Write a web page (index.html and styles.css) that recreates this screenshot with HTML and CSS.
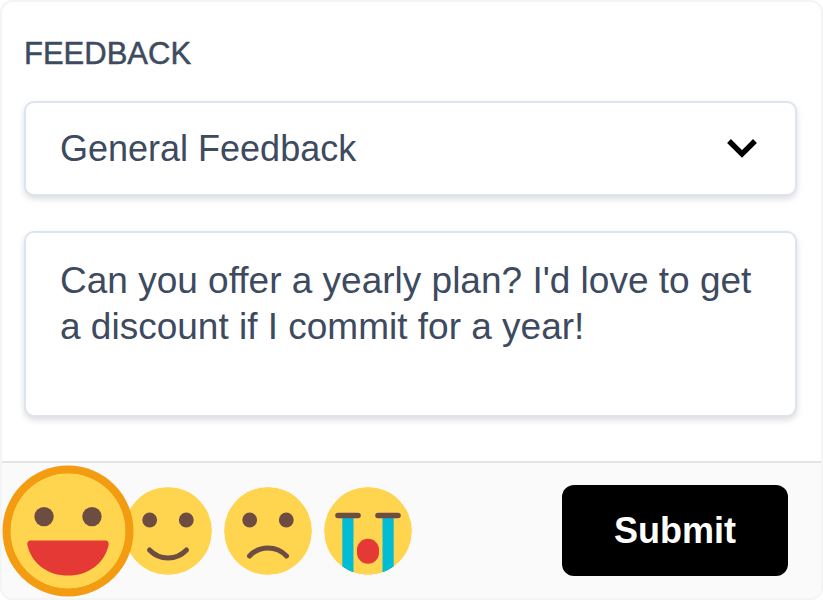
FILE: index.html
```html
<!DOCTYPE html>
<html lang="en">

<head>
    <meta charset="UTF-8">
    <meta name="viewport" content="width=device-width, initial-scale=1.0">
    <title>Feedback</title>
    <link rel="stylesheet" href="styles.css">
</head>

<body>
    <form class="feedback">
        <div class="content">
            <label class="title" for="topic">FEEDBACK</label>

            <div class="select-box">
                <select class="field" id="topic">
                    <option selected>General Feedback</option>
                    <option>Bug Report</option>
                    <option>Feature Request</option>
                </select>
                <svg class="chevron" viewBox="0 0 30 20" aria-hidden="true">
                    <path d="M2 2L15 15L28 2" fill="none" stroke="#000" stroke-width="5.4" />
                </svg>
            </div>

            <textarea class="field message" aria-label="Message" spellcheck="false">Can you offer a yearly plan? I'd love to get a discount if I commit for a year!</textarea>
        </div>

        <div class="footer">
            <div class="moods">
                <label class="mood">
                    <input type="radio" name="mood" value="great" aria-label="Great" checked>
                    <svg viewBox="-44 -44 88 88">
                        <circle r="44" fill="#ffd54f" />
                        <circle cx="-18.3" cy="-11" r="7.4" fill="#6d4c41" />
                        <circle cx="18.3" cy="-11" r="7.4" fill="#6d4c41" />
                        <path d="M-28.6 7.2H28.6C30.2 7.2 31.4 8.8 31 10.6C28 24.5 15.5 34 0 34S-28 24.5 -31 10.6C-31.4 8.8 -30.2 7.2 -28.6 7.2Z" fill="#e53935" />
                    </svg>
                </label>
                <label class="mood">
                    <input type="radio" name="mood" value="good" aria-label="Good">
                    <svg viewBox="-44 -44 88 88">
                        <circle r="44" fill="#ffd54f" />
                        <circle cx="-18.3" cy="-11" r="7.4" fill="#6d4c41" />
                        <circle cx="18.3" cy="-11" r="7.4" fill="#6d4c41" />
                        <path d="M-18.5 19A25.4 25.4 0 0 0 18.5 19" fill="none" stroke="#6d4c41" stroke-width="5" stroke-linecap="round" />
                    </svg>
                </label>
                <label class="mood">
                    <input type="radio" name="mood" value="bad" aria-label="Bad">
                    <svg viewBox="-44 -44 88 88">
                        <circle r="44" fill="#ffd54f" />
                        <circle cx="-18.3" cy="-11" r="7.4" fill="#6d4c41" />
                        <circle cx="18.3" cy="-11" r="7.4" fill="#6d4c41" />
                        <path d="M-18.5 25A25.4 25.4 0 0 1 18.5 25" fill="none" stroke="#6d4c41" stroke-width="5" stroke-linecap="round" />
                    </svg>
                </label>
                <label class="mood">
                    <input type="radio" name="mood" value="awful" aria-label="Awful">
                    <svg viewBox="-44 -44 88 88">
                        <circle r="44" fill="#ffd54f" />
                        <path d="M-25.7 -14H-14.5V41.5Q-20.5 39.6 -25.7 35.7ZM25.7 -14H14.5V41.5Q20.5 39.6 25.7 35.7Z" fill="#00bcd4" />
                        <path d="M-30 -15.5H-10M10 -15.5H30" stroke="#6d4c41" stroke-width="5.6" stroke-linecap="round" />
                        <rect x="-11" y="7.7" width="22" height="25" rx="11" fill="#e53935" />
                    </svg>
                </label>
            </div>

            <button class="submit" type="button">Submit</button>
        </div>
    </form>
</body>

</html>
```

FILE: styles.css
```css
* {
    padding: 0px;
    margin: 0px;

    box-sizing: border-box;
}

body {
    background-color: white;
    font-family: "Liberation Sans", Arial, sans-serif;
    color: #3d4a60;
}

.feedback {
    min-height: 100vh;

    display: flex;
    flex-direction: column;

    border: 2px solid #f4f4f4;
    border-radius: 12px;
    overflow: hidden;
}

.content {
    flex: 1;

    display: flex;
    flex-direction: column;

    padding: 33px 24px 44px 22px;
}

.title {
    font-size: 31px;
    line-height: 38px;
    -webkit-text-stroke: 0.5px #3d4a60;

    margin-bottom: 28px;
}

.field {
    display: block;
    width: 100%;

    border: 2px solid #dce4ef;
    border-radius: 10px;
    box-shadow: 0 3px 6px rgba(0, 0, 0, 0.14);

    background-color: white;
    color: inherit;
    font-family: inherit;
    font-size: 37px;
    line-height: 46px;

    outline: none;
}

.select-box {
    position: relative;
    margin-bottom: 35px;
}

select.field {
    appearance: none;
    height: 95px;
    padding: 0 80px 0 34px;
    font-size: 36px;
}

.chevron {
    position: absolute;
    top: 38px;
    right: 40px;
    width: 30px;
    height: 20px;

    pointer-events: none;
}

.message {
    flex: 1;
    min-height: 186px;
    padding: 25px 34px;
    resize: none;
    overflow: hidden;
}

.footer {
    display: flex;
    align-items: center;
    justify-content: space-between;

    padding: 22px 33px 22px 22px;
    border-top: 2px solid #e4e4e4;
    background-color: #fafafa;
}

.moods {
    display: flex;
    gap: 12px;
}

.mood {
    position: relative;
    width: 88px;
    height: 88px;
    cursor: pointer;
}

.mood input {
    position: absolute;
    opacity: 0;
}

.mood svg {
    display: block;
    width: 100%;
    height: 100%;
    border-radius: 50%;
}

/* chosen face grows over its neighbour */
.mood:has(input:checked) {
    z-index: 1;
}

.mood input:checked + svg {
    background-color: #f39c12;
    box-shadow: 0 0 0 6px #f39c12;
    transform: scale(1.31);
}

.submit {
    padding: 23px 52px 22px;
    border: none;
    border-radius: 12px;

    background-color: black;
    color: white;
    font-family: inherit;
    font-size: 36px;
    font-weight: bold;
    line-height: 46px;
    cursor: pointer;
}
```
